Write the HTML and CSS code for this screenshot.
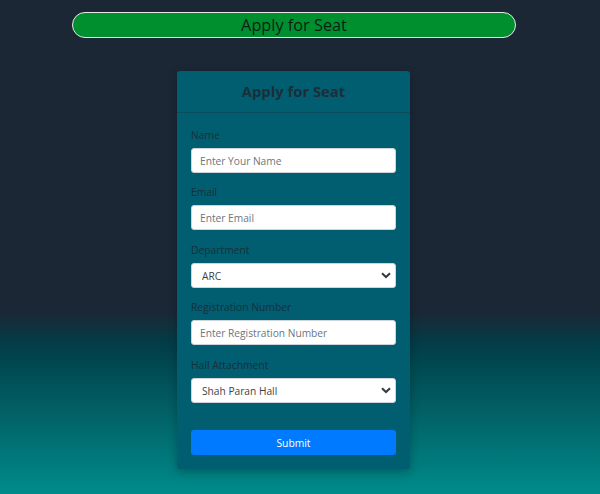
FILE: index.html
```
<!DOCTYPE html>
<html>
<head>
<meta charset="utf-8">
<link rel="stylesheet" href="styles.css">
</head>
<body>
<div class="page">
  <div class="topbar">Apply for Seat</div>
  <div class="card">
    <div class="card-header">Apply for Seat</div>
    <form class="card-body">
      <div class="group">
        <label class="label">Name</label>
        <input class="control" type="text" placeholder="Enter Your Name">
      </div>
      <div class="group">
        <label class="label">Email</label>
        <input class="control" type="text" placeholder="Enter Email">
      </div>
      <div class="group">
        <label class="label">Department</label>
        <div class="select-wrap">
          <select class="control select"><option>ARC</option></select>
          <svg class="chev" width="10" height="7" viewBox="0 0 10 7"><path d="M1 1.2 L5 5 L9 1.2" fill="none" stroke="#343a40" stroke-width="2"/></svg>
        </div>
      </div>
      <div class="group">
        <label class="label">Registration Number</label>
        <input class="control" type="text" placeholder="Enter Registration Number">
      </div>
      <div class="group">
        <label class="label">Hall Attachment</label>
        <div class="select-wrap">
          <select class="control select"><option>Shah Paran Hall</option></select>
          <svg class="chev" width="10" height="7" viewBox="0 0 10 7"><path d="M1 1.2 L5 5 L9 1.2" fill="none" stroke="#343a40" stroke-width="2"/></svg>
        </div>
      </div>
      <button class="submit" type="button">Submit</button>
    </form>
  </div>
</div>
</body>
</html>
```
FILE: styles.css
```
html, body {
  margin: 0;
  padding: 0;
  height: 100%;
}
body {
  font-family: "Open Sans", "Noto Sans", sans-serif;
  background: linear-gradient(to bottom, #1b2735 0%, #1b2735 63%, #023d47 69.5%, #008b8b 100%);
  min-height: 494px;
}
.page {
  width: 588px;
  display: flex;
  flex-direction: column;
  padding-top: 12px;
}
.topbar {
  align-self: center;
  width: 442px;
  height: 24px;
  background: #008f2f;
  border: 1px solid #e8e8e8;
  border-radius: 13px;
  color: #0d1f14;
  font-size: 16.3px;
  line-height: 24px;
  text-align: center;
}
.card {
  margin-top: 33px;
  margin-left: 177px;
  width: 233px;
  background: #005e70;
  border-radius: 3px;
  box-shadow: 0 3px 10px rgba(0, 0, 0, 0.25);
}
.card-header {
  height: 41px;
  border-bottom: 1px solid #0a4d5b;
  color: #1b2e3a;
  font-weight: 700;
  font-size: 14.8px;
  line-height: 40px;
  text-align: center;
}
.card-body {
  margin: 0;
  padding: 14px 14px 14px;
  display: flex;
  flex-direction: column;
}
.group {
  display: flex;
  flex-direction: column;
  margin-bottom: 11.25px;
}
.label {
  color: #1a2f3a;
  font-size: 10.3px;
  line-height: 16px;
  margin-bottom: 5px;
}
.control {
  box-sizing: border-box;
  width: 205px;
  height: 25px;
  margin: 0;
  border: 1px solid #ced4da;
  border-radius: 3px;
  background: #fff;
  padding: 0 8px;
  font-family: inherit;
  font-size: 10.2px;
  color: #3d4248;
  outline: none;
}
.control::placeholder {
  color: #6c757d;
}
.select-wrap {
  position: relative;
}
.select {
  appearance: none;
  -webkit-appearance: none;
  padding-left: 10px;
}
.chev {
  position: absolute;
  right: 5px;
  top: 9px;
  pointer-events: none;
}
.submit {
  margin-top: 16px;
  width: 205px;
  height: 25px;
  border: none;
  border-radius: 3px;
  background: #007bff;
  color: #fff;
  font-family: inherit;
  font-size: 10.3px;
  padding: 0;
}
```
